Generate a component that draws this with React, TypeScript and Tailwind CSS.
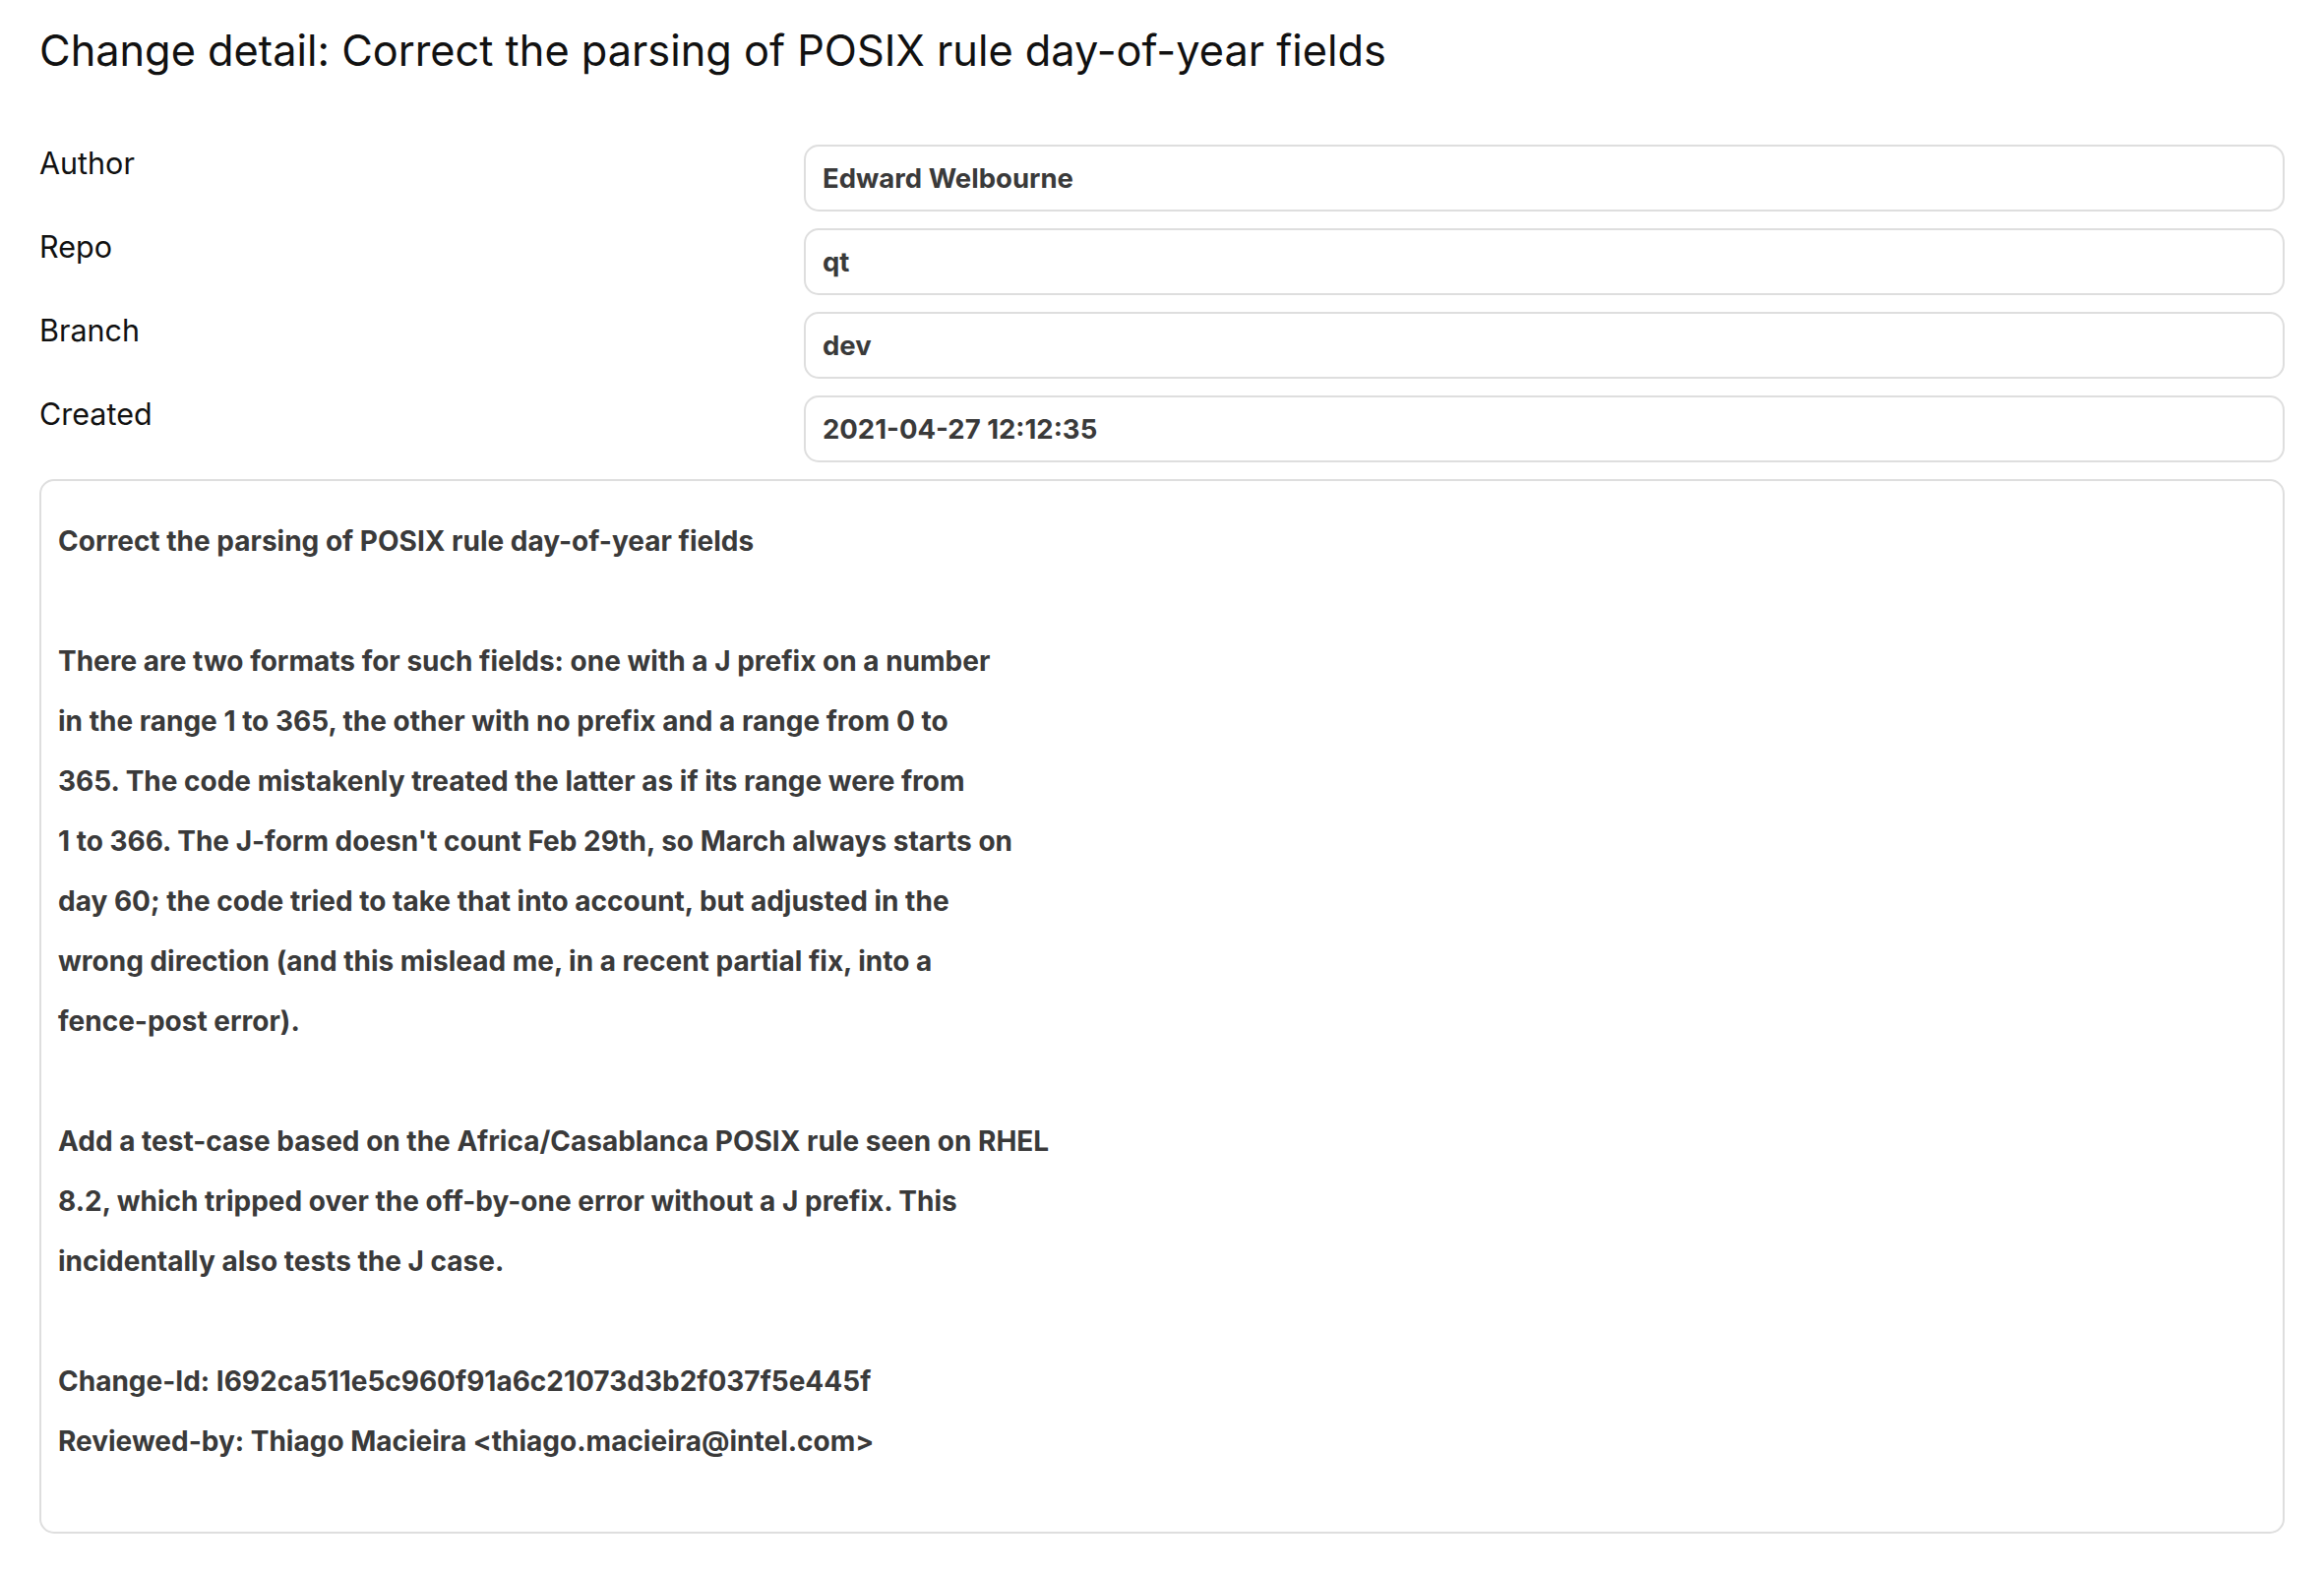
const fields = [
  { label: "Author", value: "Edward Welbourne" },
  { label: "Repo", value: "qt" },
  { label: "Branch", value: "dev" },
  { label: "Created", value: "2021-04-27 12:12:35" },
];

const message = `Correct the parsing of POSIX rule day-of-year fields

There are two formats for such fields: one with a J prefix on a number
in the range 1 to 365, the other with no prefix and a range from 0 to
365. The code mistakenly treated the latter as if its range were from
1 to 366. The J-form doesn't count Feb 29th, so March always starts on
day 60; the code tried to take that into account, but adjusted in the
wrong direction (and this mislead me, in a recent partial fix, into a
fence-post error).

Add a test-case based on the Africa/Casablanca POSIX rule seen on RHEL
8.2, which tripped over the off-by-one error without a J prefix. This
incidentally also tests the J case.

Change-Id: I692ca511e5c960f91a6c21073d3b2f037f5e445f
Reviewed-by: Thiago Macieira <thiago.macieira@intel.com>`;

export default function App() {
  return (
    <div className="min-h-screen bg-white px-[40px] pt-[25px] font-['Inter',sans-serif]">
      {/* TITLE */}
      <h1 className="text-[43.3px] leading-[53px] font-normal text-[#111]">
        Change detail: Correct the parsing of POSIX rule day-of-year fields
      </h1>

      {/* FIELDS */}
      <div className="mt-[69px] flex flex-col gap-[17px]">
        {fields.map((f) => (
          <div key={f.label} className="flex">
            <div className="w-[777px] shrink-0 pt-[1px] text-[30.5px] leading-[36px] text-[#111]">
              {f.label}
            </div>
            <div className="flex h-[68px] flex-1 items-center rounded-[15px] border-2 border-[#dedede] px-[17px] pt-[2px] text-[27.5px] font-bold text-[#3a3a3a]">
              {f.value}
            </div>
          </div>
        ))}

        {/* MESSAGE */}
        <div className="rounded-[15px] border-2 border-[#dedede] px-[17px] pt-[31px] pb-[61px] text-[28px] leading-[61px] font-bold text-[#3a3a3a] whitespace-pre-wrap">
          {message}
        </div>
      </div>
    </div>
  );
}
